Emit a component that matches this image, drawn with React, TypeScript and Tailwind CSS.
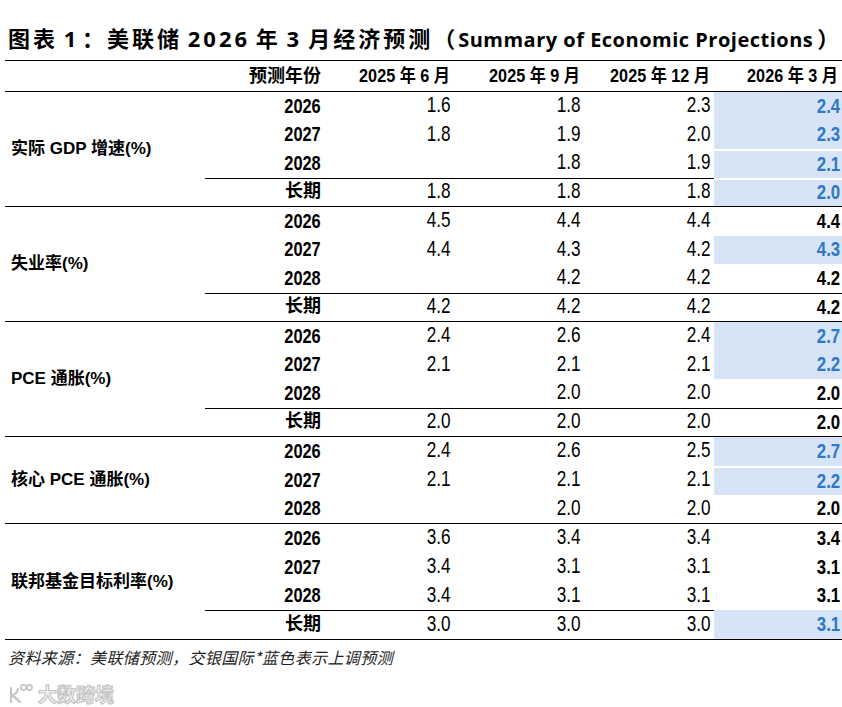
type Row = {
  year: string;
  vals: string[];
  blue?: boolean;
  sep?: boolean;
};

type Section = {
  label: string;
  rows: Row[];
  heights: string[];
};

const sections: Section[] = [
  {
    label: "实际 GDP 增速(%)",
    heights: ["h-[29px]", "h-[28px]", "h-[29px]", "h-[28px]"],
    rows: [
      { year: "2026", vals: ["1.6", "1.8", "2.3", "2.4"], blue: true },
      { year: "2027", vals: ["1.8", "1.9", "2.0", "2.3"], blue: true },
      { year: "2028", vals: ["", "1.8", "1.9", "2.1"], blue: true, sep: true },
      { year: "长期", vals: ["1.8", "1.8", "1.8", "2.0"], blue: true, sep: true },
    ],
  },
  {
    label: "失业率(%)",
    heights: ["h-[29px]", "h-[28px]", "h-[29px]", "h-[28px]"],
    rows: [
      { year: "2026", vals: ["4.5", "4.4", "4.4", "4.4"] },
      { year: "2027", vals: ["4.4", "4.3", "4.2", "4.3"], blue: true },
      { year: "2028", vals: ["", "4.2", "4.2", "4.2"] },
      { year: "长期", vals: ["4.2", "4.2", "4.2", "4.2"] },
    ],
  },
  {
    label: "PCE 通胀(%)",
    heights: ["h-[29px]", "h-[28px]", "h-[29px]", "h-[28px]"],
    rows: [
      { year: "2026", vals: ["2.4", "2.6", "2.4", "2.7"], blue: true },
      { year: "2027", vals: ["2.1", "2.1", "2.1", "2.2"], blue: true },
      { year: "2028", vals: ["", "2.0", "2.0", "2.0"] },
      { year: "长期", vals: ["2.0", "2.0", "2.0", "2.0"] },
    ],
  },
  {
    label: "核心 PCE 通胀(%)",
    heights: ["h-[29px]", "h-[29px]", "h-[28px]"],
    rows: [
      { year: "2026", vals: ["2.4", "2.6", "2.5", "2.7"], blue: true },
      { year: "2027", vals: ["2.1", "2.1", "2.1", "2.2"], blue: true, sep: true },
      { year: "2028", vals: ["", "2.0", "2.0", "2.0"] },
    ],
  },
  {
    label: "联邦基金目标利率(%)",
    heights: ["h-[29px]", "h-[29px]", "h-[28px]", "h-[29px]"],
    rows: [
      { year: "2026", vals: ["3.6", "3.4", "3.4", "3.4"] },
      { year: "2027", vals: ["3.4", "3.1", "3.1", "3.1"] },
      { year: "2028", vals: ["3.4", "3.1", "3.1", "3.1"] },
      { year: "长期", vals: ["3.0", "3.0", "3.0", "3.1"], blue: true },
    ],
  },
];

const cols = "grid grid-cols-[121px_128px_130px_130px_128px]";
const font = "font-['Liberation_Sans','Noto_Sans_CJK_SC',sans-serif]";

function DataRow({ row, height }: { row: Row; height: string }) {
  const long = row.year === "长期";
  const line = long ? "border-t border-black" : "";
  return (
    <div className={`${cols} ${height} leading-none`}>
      <div className={`flex items-center justify-end pr-[5px] pb-[3px] ${line}`}>
        {long ? (
          <span className="text-[18px] font-bold">长期</span>
        ) : (
          <span className="inline-block origin-right scale-x-[0.78] text-[21px] font-bold">
            {row.year}
          </span>
        )}
      </div>
      {row.vals.slice(0, 3).map((v, i) => (
        <div key={i} className={`flex items-center justify-end pr-[3px] pb-[3px] ${line}`}>
          <span className="inline-block origin-right scale-x-[0.78] text-[22px]">{v}</span>
        </div>
      ))}
      <div
        className={`flex items-center justify-end pr-[2px] pb-[3px] ${
          row.blue ? "bg-[#d6e4f6] text-[#2f78c8]" : ""
        } ${row.sep ? "border-t-2 border-white" : long && !row.blue ? "border-t border-black" : ""}`}
      >
        <span className="inline-block origin-right scale-x-[0.8] text-[21px] font-bold">
          {row.vals[3]}
        </span>
      </div>
    </div>
  );
}

function Watermark() {
  return (
    <div className="flex items-center gap-[4px]">
      <svg width="26" height="22" viewBox="0 0 26 22" fill="none" stroke="#c6c6c6" strokeWidth="2.2">
        <path d="M3 5 V19 M3 13 C7 12 9 10 10 6 M5 13 C8 15 10 17 12 19" strokeLinecap="round" />
        <circle cx="15.5" cy="4.5" r="2.6" strokeWidth="1.6" />
        <circle cx="21.5" cy="4.5" r="2.6" strokeWidth="1.6" />
      </svg>
      <span className="text-[19px] font-['Noto_Sans_CJK_SC',sans-serif] font-bold text-white [-webkit-text-stroke:1.2px_#c4c4c4]">
        大数跨境
      </span>
    </div>
  );
}

export default function App() {
  const cjk = "tracking-[3px]";
  return (
    <div className={`w-[842px] h-[707px] bg-white text-black ${font}`}>
      <div className="h-[60px] pl-[8px] pt-[23px]">
        <h1 className="font-['Open_Sans','Noto_Sans_CJK_SC',sans-serif] text-[22px] font-bold leading-[30px] whitespace-pre">
          <span className={cjk}>图表</span>
          <span>{" 1 "}</span>
          <span className={cjk}>：美联储</span>
          <span>{" "}</span>
          <span className="tracking-[3px]">2026</span>
          <span>{" "}</span>
          <span className={cjk}>年</span>
          <span>{" 3"}</span>
          <span className={`${cjk} inline-block ml-[9px]`}>月经济预测（</span>
          <span className="text-[20px] tracking-[0.5px]">Summary of Economic Projections</span>
          <span className="pl-[4px]">）</span>
        </h1>
      </div>

      <div className="ml-[5px]">
        <div className="flex h-[32px] border-y border-black">
          <div className="w-[200px]" />
          <div className={`${cols} flex-1 text-[18px] font-bold`}>
            <div className="flex items-center justify-end pr-[5px]">预测年份</div>
            {["2025 年 6 月", "2025 年 9 月", "2025 年 12 月", "2026 年 3 月"].map((h) => (
              <div key={h} className="flex items-center justify-end pr-[4px]">
                <span className="inline-block origin-right scale-x-[0.9] whitespace-nowrap">{h}</span>
              </div>
            ))}
          </div>
        </div>

        {sections.map((s) => (
          <div key={s.label} className="flex border-b border-black">
            <div className="w-[200px] flex items-center pl-[6px] text-[17px] font-semibold">
              <span className="whitespace-nowrap">{s.label}</span>
            </div>
            <div className="flex-1">
              {s.rows.map((r, i) => (
                <DataRow key={r.year} row={r} height={s.heights[i]} />
              ))}
            </div>
          </div>
        ))}
      </div>

      <div className="pl-[8px] pt-[5px] text-[16px] italic tracking-[0.4px] text-[#222] font-['Noto_Sans_CJK_SC',sans-serif] leading-[24px]">
        资料来源：美联储预测，交银国际*蓝色表示上调预测
      </div>
      <div className="pl-[8px] pt-[11px]">
        <Watermark />
      </div>
    </div>
  );
}
